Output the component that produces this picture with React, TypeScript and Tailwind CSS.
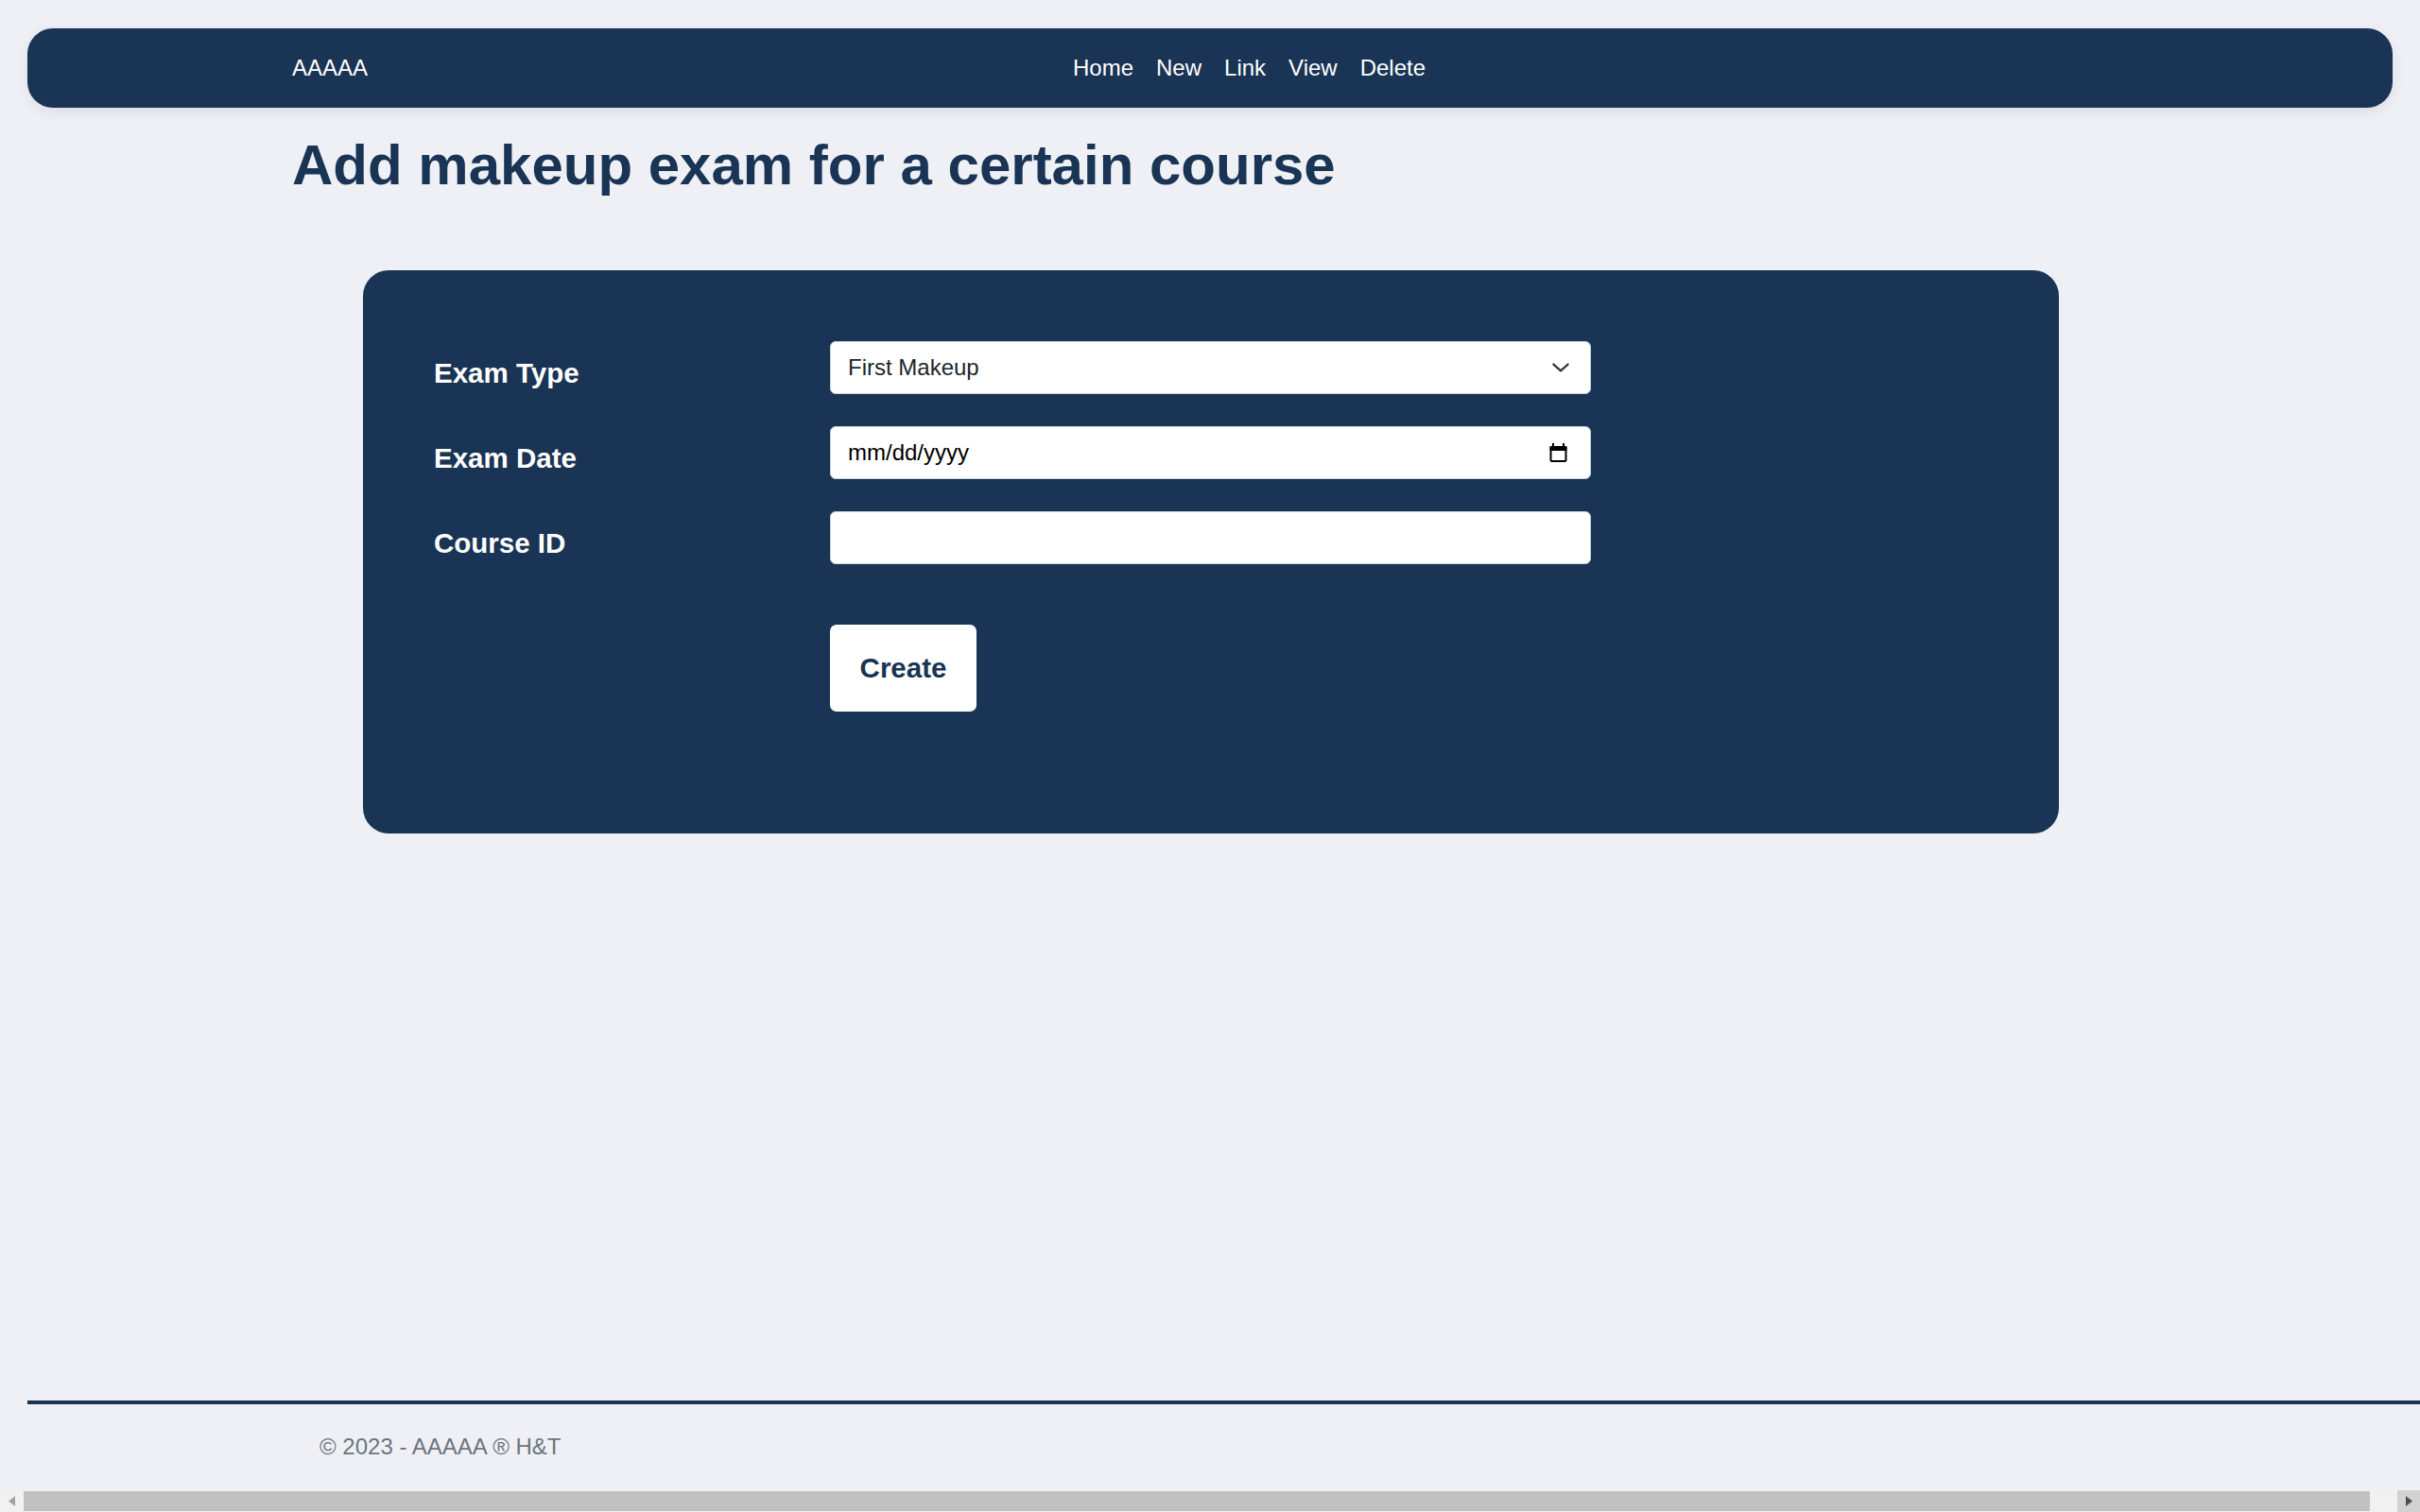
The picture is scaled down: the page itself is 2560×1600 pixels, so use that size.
const navLinks = ["Home", "New", "Link", "View", "Delete"];

function Chevron() {
  return (
    <svg width="22" height="22" viewBox="0 0 16 16" fill="none">
      <path d="m2.5 5.5 5.5 5 5.5-5" stroke="#343a40" strokeWidth="1.7" strokeLinecap="round" strokeLinejoin="round" />
    </svg>
  );
}

function CalendarIcon() {
  return (
    <svg width="19" height="20" viewBox="0 0 19 20" fill="none">
      <rect x="3" y="0" width="2" height="4" fill="#000" />
      <rect x="14" y="0" width="2" height="4" fill="#000" />
      <rect x="0.5" y="3" width="18" height="5" rx="1" fill="#000" />
      <rect x="1.5" y="4" width="16" height="15" rx="1" stroke="#000" strokeWidth="2" />
    </svg>
  );
}

function FieldRow({ label, children }: { label: string; children: React.ReactNode }) {
  return (
    <div className="flex items-start">
      <label className="w-[419px] mt-[17px] text-[29.5px] leading-[33px] font-bold text-white">{label}</label>
      <div className="w-[805px] h-[56px]">{children}</div>
    </div>
  );
}

export default function App() {
  return (
    <div className="h-screen flex flex-col overflow-hidden bg-[#eff0f5] font-['Liberation_Sans',Arial,sans-serif]">
      {/* navbar */}
      <header className="mt-[30px] mx-[29px] h-[84px] rounded-[27px] bg-[#193454] shadow-[0_4px_16px_rgba(0,0,0,0.08)] flex items-center pl-[280px] pr-[301px]">
        <span className="text-[24px] text-white mr-[24px]">AAAAA</span>
        <nav className="flex-1 flex justify-center">
          {navLinks.map((l) => (
            <a key={l} className="px-[12px] text-[24px] text-white">{l}</a>
          ))}
        </nav>
      </header>

      <main>
        <h1 className="mt-[25px] pl-[309px] text-[60px] leading-[72px] font-bold text-[#193454]">
          Add makeup exam for a certain course
        </h1>

        <div className="mt-[75px] ml-[384px] w-[1794px] rounded-[27px] bg-[#193454] pt-[75px] pl-[75px] pb-[129px]">
          <div className="flex flex-col gap-[34px]">
            <FieldRow label="Exam Type">
              <div className="h-full bg-white rounded-[6px] border border-[#ced4da] flex items-center justify-between pl-[18px] pr-[20px] text-[24px] text-[#212529]">
                <span>First Makeup</span>
                <Chevron />
              </div>
            </FieldRow>
            <FieldRow label="Exam Date">
              <div className="h-full bg-white rounded-[6px] border border-[#ced4da] flex items-center justify-between pl-[18px] pr-[24px] text-[24px] text-black">
                <span>mm/dd/yyyy</span>
                <CalendarIcon />
              </div>
            </FieldRow>
            <FieldRow label="Course ID">
              <input type="text" className="w-full h-full bg-white rounded-[6px] border border-[#ced4da] px-[18px] text-[24px] text-[#212529] outline-none" />
            </FieldRow>
          </div>
          <button className="mt-[64px] ml-[419px] w-[155px] h-[92px] rounded-[7px] bg-white text-[29.5px] font-bold text-[#193454] flex items-center justify-center">
            Create
          </button>
        </div>
      </main>

      {/* footer */}
      <footer className="mt-auto ml-[29px] border-t-4 border-[#193454] h-[95px] pl-[309px] leading-[90px] text-[24px] text-[#6c757d]">
        © 2023 - AAAAA ® H&amp;T
      </footer>

      {/* horizontal scrollbar */}
      <div className="h-[23px] shrink-0 bg-[#f1f1f1] flex">
        <div className="w-[25px] flex items-center justify-center">
          <svg width="7" height="11" viewBox="0 0 7 11"><path d="M7 0 0 5.5 7 11z" fill="#a3a3a3" /></svg>
        </div>
        <div className="flex-1 my-[1px] bg-[#c1c1c1]" />
        <div className="w-[29px]" />
        <div className="w-[24px] bg-[#d2d2d2] flex items-center justify-center">
          <svg width="7" height="11" viewBox="0 0 7 11"><path d="M0 0 7 5.5 0 11z" fill="#505050" /></svg>
        </div>
      </div>
    </div>
  );
}
